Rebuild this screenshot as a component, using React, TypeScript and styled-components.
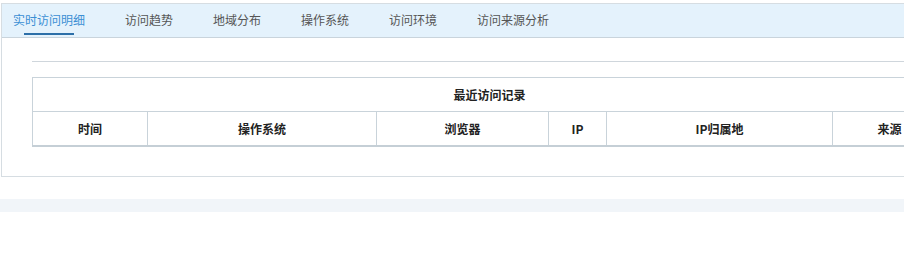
import styled, { createGlobalStyle } from 'styled-components';

const GlobalStyle = createGlobalStyle`
  html, body {
    margin: 0;
    padding: 0;
    background: #fff;
  }
  body {
    font-family: "Microsoft YaHei", "Noto Sans CJK SC", "Liberation Sans", sans-serif;
    font-size: 12px;
    color: #333;
  }
`;

const Page = styled.div`
  width: 100%;
  overflow: hidden;
  padding-top: 3px;
`;

const Panel = styled.div`
  width: 1000px;
  margin-left: 1px;
  border: 1px solid #d6dde2;
  border-right: none;
  height: 174px;
  box-sizing: border-box;
  display: flex;
  flex-direction: column;
`;

const TabBar = styled.div`
  height: 33px;
  background: #e4f2fc;
  border-bottom: 1px solid #c9d4dc;
  display: flex;
  align-items: stretch;
  padding-left: 11px;
  gap: 40px;
`;

const Tab = styled.div<{ $active?: boolean }>`
  position: relative;
  line-height: 31px;
  font-size: 12px;
  color: ${(p) => (p.$active ? '#3b8fd4' : '#555')};

  &::after {
    content: '';
    display: ${(p) => (p.$active ? 'block' : 'none')};
    position: absolute;
    left: 50%;
    bottom: 2px;
    width: 50px;
    margin-left: -25px;
    height: 2px;
    background: #2c6fa8;
  }
`;

const Content = styled.div`
  padding: 23px 0 0 30px;
`;

const Divider = styled.div`
  height: 1px;
  background: #cfd6dc;
  margin-bottom: 15px;
`;

const Table = styled.table`
  border-collapse: collapse;
  table-layout: fixed;
  width: 914px;
  border-bottom: 2px solid #c5cfd6;
`;

const Cell = styled.th`
  border: 1px solid #c9d3da;
  height: 33px;
  padding: 0;
  font-weight: bold;
  font-size: 12px;
  color: #222;
  text-align: center;
  vertical-align: middle;
`;

const Band = styled.div`
  height: 13px;
  margin-top: 22px;
  background: #f1f5f9;
`;

const tabs = ['实时访问明细', '访问趋势', '地域分布', '操作系统', '访问环境', '访问来源分析'];

const columns = [
  { label: '时间', width: 115 },
  { label: '操作系统', width: 229 },
  { label: '浏览器', width: 172 },
  { label: 'IP', width: 58 },
  { label: 'IP归属地', width: 226 },
  { label: '来源', width: 114 },
];

export default function App() {
  return (
    <>
      <GlobalStyle />
      <Page>
        <Panel>
          <TabBar>
            {tabs.map((t, i) => (
              <Tab key={t} $active={i === 0}>
                {t}
              </Tab>
            ))}
          </TabBar>
          <Content>
            <Divider />
            <Table>
              <colgroup>
                {columns.map((c) => (
                  <col key={c.label} style={{ width: c.width }} />
                ))}
              </colgroup>
              <thead>
                <tr>
                  <Cell colSpan={columns.length}>最近访问记录</Cell>
                </tr>
                <tr>
                  {columns.map((c) => (
                    <Cell key={c.label}>{c.label}</Cell>
                  ))}
                </tr>
              </thead>
            </Table>
          </Content>
        </Panel>
        <Band />
      </Page>
    </>
  );
}
